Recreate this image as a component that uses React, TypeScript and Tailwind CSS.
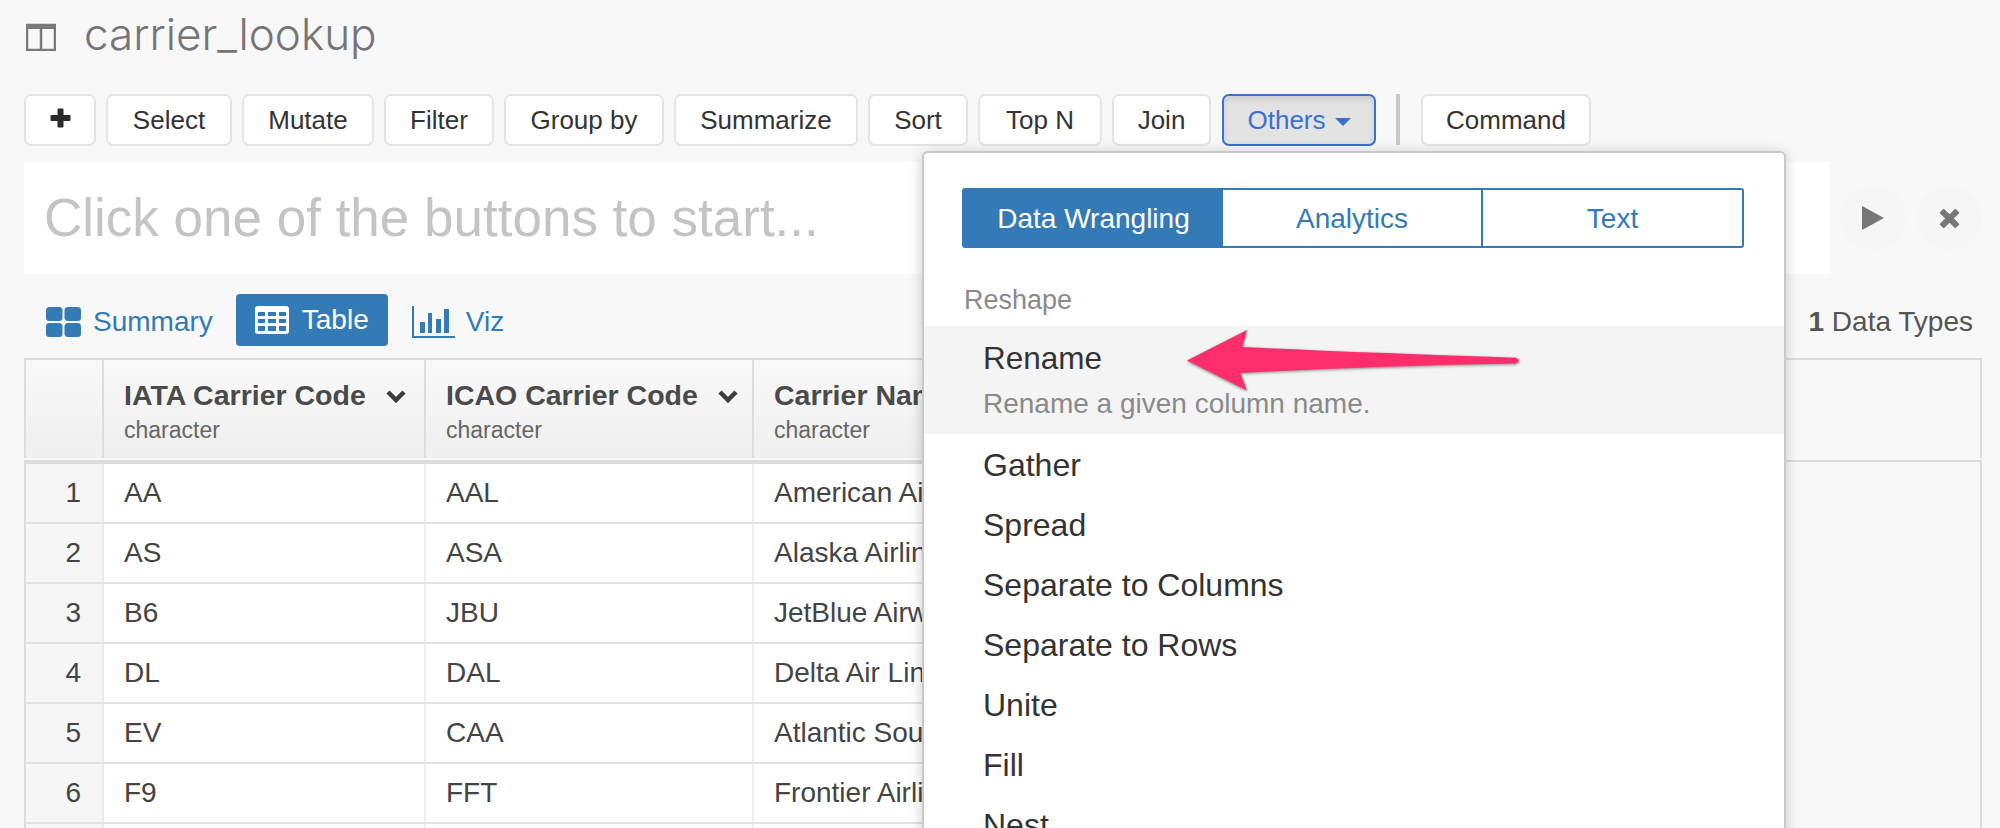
const BUTTONS = [
  { label: 'Select', width: 'w-[126px]' },
  { label: 'Mutate', width: 'w-[132px]' },
  { label: 'Filter', width: 'w-[110px]' },
  { label: 'Group by', width: 'w-[160px]' },
  { label: 'Summarize', width: 'w-[184px]' },
  { label: 'Sort', width: 'w-[100px]' },
  { label: 'Top N', width: 'w-[124px]' },
  { label: 'Join', width: 'w-[99px]' },
];

const ROWS = [
  ['AA', 'AAL', 'American Airlines'],
  ['AS', 'ASA', 'Alaska Airlines'],
  ['B6', 'JBU', 'JetBlue Airways'],
  ['DL', 'DAL', 'Delta Air Lines'],
  ['EV', 'CAA', 'Atlantic Southeast'],
  ['F9', 'FFT', 'Frontier Airlines'],
];

const MENU_ITEMS = ['Gather', 'Spread', 'Separate to Columns', 'Separate to Rows', 'Unite', 'Fill', 'Nest'];

function HeaderCell({ title, width }: { title: string; width: string }) {
  return (
    <div className={`${width} shrink-0 border-r-2 border-[#dcdcdc] pl-[20px] pt-[19px]`}>
      <div className="flex items-center">
        <span className="text-[28.5px] leading-[32px] font-bold whitespace-nowrap text-[#4a4a4a]">{title}</span>
        <svg width="22" height="14" viewBox="0 0 22 14" className="ml-[19px] mt-[2px] shrink-0">
          <path d="M3 3l8 8 8-8" fill="none" stroke="#3c3c3c" strokeWidth="4.5" />
        </svg>
      </div>
      <div className="mt-[6px] text-[23px] leading-[26px] text-[#666]">character</div>
    </div>
  );
}

export default function App() {
  return (
    <div className="relative h-[828px] w-[2000px] overflow-hidden bg-[#f8f8f8] font-['Liberation_Sans',sans-serif]">
      {/* Title */}
      <div className="flex h-[94px] items-start pl-[26px] pt-[9px]">
        <svg width="30" height="28" viewBox="0 0 30 28" className="mt-[14px]">
          <path d="M1 2h28v25H1z M15 6v21" fill="none" stroke="#7a7a7a" strokeWidth="2.5" />
          <rect x="1" y="1" width="28" height="5" fill="#7a7a7a" />
        </svg>
        <h1 className="ml-[28px] font-['Inter',sans-serif] text-[44px] leading-[50px] font-light text-[#757575]">
          carrier_lookup
        </h1>
      </div>

      {/* Toolbar */}
      <div className="flex h-[52px] items-stretch gap-[10px] pl-[24px]">
        <button className="flex w-[72px] items-center justify-center rounded-[7px] border-2 border-[#e4e4e4] bg-white">
          <svg width="21" height="20" viewBox="0 0 21 20" className="mb-[4px]">
            <path d="M7.5 1.5q0-1 1-1h4q1 0 1 1V7h6q1 0 1 1v4q0 1-1 1h-6v5.500q0 1-1 1h-4q-1 0-1-1V13h-6q-1 0-1-1V8q0-1 1-1h6z" fill="#2b2b2b" />
          </svg>
        </button>
        {BUTTONS.map((b) => (
          <button
            key={b.label}
            className={`${b.width} rounded-[7px] border-2 border-[#e4e4e4] bg-white text-[26px] text-[#333]`}
          >
            {b.label}
          </button>
        ))}
        <button className="ml-[1px] flex w-[154px] items-center justify-center gap-[9px] rounded-[7px] border-2 border-[#3a70d0] bg-[#e3e3e3] text-[26px] text-[#3a70d0] shadow-[inset_0_3px_6px_rgba(0,0,0,0.1)]">
          Others
          <span className="mt-[3px] border-x-[8px] border-t-[8px] border-x-transparent border-t-[#3a70d0]" />
        </button>
        <div className="ml-[10px] mb-[1px] w-[4px] bg-[#c8c8c8]" />
        <button className="ml-[11px] w-[170px] rounded-[7px] border-2 border-[#e4e4e4] bg-white text-[26px] text-[#333]">
          Command
        </button>
      </div>

      {/* Input row */}
      <div className="mt-[16px] flex h-[112px] items-center pl-[24px]">
        <div className="flex h-full w-[1806px] items-center bg-white pl-[20px] text-[53px] text-[#c4c4c4]">
          Click one of the buttons to start...
        </div>
        <div className="ml-[10px] flex h-[64px] w-[66px] items-center justify-center rounded-full bg-[#f6f6f6]">
          <svg width="22" height="24" viewBox="0 0 22 24">
            <path d="M0 0l22 12L0 24z" fill="#777" />
          </svg>
        </div>
        <div className="ml-[10px] flex h-[64px] w-[66px] items-center justify-center rounded-full bg-[#f6f6f6]">
          <svg width="23" height="23" viewBox="0 0 20 20">
            <path d="M2 5l3-3 5 5 5-5 3 3-5 5 5 5-3 3-5-5-5 5-3-3 5-5z" fill="#777" stroke="#777" strokeLinejoin="round" />
          </svg>
        </div>
      </div>

      {/* View tabs */}
      <div className="flex h-[84px] items-start pl-[46px] pt-[20px]">
        <div className="mt-[2px] flex h-[52px] items-center gap-[12px] text-[28px] text-[#337ab7]">
          <svg width="35" height="30" viewBox="0 0 35 30">
            <rect x="0" y="0" width="16.500" height="14" rx="3.500" fill="#337ab7" />
            <rect x="18.500" y="0" width="16.500" height="14" rx="3.500" fill="#337ab7" />
            <rect x="0" y="16" width="16.500" height="14" rx="3.500" fill="#337ab7" />
            <rect x="18.500" y="16" width="16.500" height="14" rx="3.500" fill="#337ab7" />
          </svg>
          Summary
        </div>
        <div className="ml-[23px] flex h-[52px] w-[152px] items-center gap-[13px] rounded-[4px] bg-[#337ab7] pl-[19px] text-[28px] text-white">
          <svg width="34" height="28" viewBox="0 0 34 28">
            <rect x="0" y="0" width="34" height="28" rx="3" fill="#fff" />
            <path
              d="M3 6h7v4H3zM13 6h8v4h-8zM24 6h7v4h-7zM3 13h7v4H3zM13 13h8v4h-8zM24 13h7v4h-7zM3 20h7v5H3zM13 20h8v5h-8zM24 20h7v5h-7z"
              fill="#337ab7"
            />
          </svg>
          Table
        </div>
        <div className="ml-[24px] mt-[2px] flex h-[52px] items-center gap-[11px] text-[28px] text-[#337ab7]">
          <svg width="43" height="32" viewBox="0 0 43 32">
            <path d="M1 0v31h42" fill="none" stroke="#337ab7" strokeWidth="2" />
            <rect x="8" y="16" width="5" height="11" fill="#337ab7" />
            <rect x="16" y="7" width="4" height="20" fill="#337ab7" />
            <rect x="24" y="13" width="5" height="14" fill="#337ab7" />
            <rect x="32" y="3" width="5" height="24" fill="#337ab7" />
          </svg>
          Viz
        </div>
        <div className="ml-auto mr-[27px] mt-[2px] flex h-[52px] items-center text-[28px] whitespace-pre text-[#555]">
          <span className="font-bold">1</span> Data Types
        </div>
      </div>

      {/* Table header */}
      <div className="ml-[24px] h-[100px] w-[1958px] border-x-2 border-t-2 border-[#dcdcdc]">
        <div className="flex h-[98px] w-[1130px] bg-gradient-to-b from-[#f9f9f9] to-[#efefef]">
          <div className="w-[78px] shrink-0 border-r-2 border-[#dcdcdc]" />
          <HeaderCell title="IATA Carrier Code" width="w-[322px]" />
          <HeaderCell title="ICAO Carrier Code" width="w-[328px]" />
          <HeaderCell title="Carrier Name" width="w-[400px]" />
        </div>
      </div>

      {/* Table body */}
      <div className="ml-[24px] mt-[2px] h-[400px] w-[1958px] border-x-2 border-t-2 border-[#dcdcdc]">
        <div className="h-[2px] w-[1130px] bg-[#dcdcdc]" />
        {ROWS.map((row, i) => (
          <div key={row[0]} className="flex h-[60px] w-[1130px] border-b-2 border-[#e2e2e2] text-[28px] text-[#444]">
            <div className="flex w-[78px] shrink-0 items-center justify-end border-r-2 border-[#eaeaea] bg-[#f6f6f6] pr-[21px]">
              {i + 1}
            </div>
            <div className="flex w-[322px] shrink-0 items-center border-r-2 border-[#eeeeee] bg-white pl-[20px]">{row[0]}</div>
            <div className="flex w-[328px] shrink-0 items-center border-r-2 border-[#eeeeee] bg-white pl-[20px]">{row[1]}</div>
            <div className="flex w-[400px] shrink-0 items-center whitespace-nowrap bg-white pl-[20px]">{row[2]}</div>
          </div>
        ))}
        <div className="flex h-[60px] w-[1130px]">
          <div className="w-[78px] shrink-0 border-r-2 border-[#eaeaea] bg-[#f6f6f6]" />
          <div className="w-[322px] shrink-0 border-r-2 border-[#eeeeee] bg-white" />
          <div className="w-[328px] shrink-0 border-r-2 border-[#eeeeee] bg-white" />
          <div className="w-[400px] shrink-0 bg-white" />
        </div>
      </div>

      {/* Others dropdown */}
      <div className="absolute left-[922px] top-[151px] h-[700px] w-[864px] rounded-[6px] border-2 border-[#c8c8c8] bg-white shadow-[0_2px_14px_rgba(0,0,0,0.2)]">
        <div className="ml-[38px] mt-[35px] flex h-[60px] w-[782px] rounded-[3px] border-2 border-[#337ab7] pb-0 text-[28px] text-[#337ab7]">
          <div className="flex w-[259px] items-center justify-center bg-[#337ab7] pt-[2px] text-white">Data Wrangling</div>
          <div className="flex w-[260px] items-center justify-center border-r-2 border-[#337ab7] pt-[2px]">Analytics</div>
          <div className="flex flex-1 items-center justify-center pt-[2px]">Text</div>
        </div>
        <div className="ml-[40px] mt-[38px] h-[29px] text-[27px] leading-[29px] text-[#8a8a8a]">Reshape</div>
        <div className="mt-[11px] h-[108px] bg-[#f4f4f4] pl-[59px] pt-[15px]">
          <div className="text-[31.5px] leading-[34px] text-[#333]">Rename</div>
          <div className="mt-[14px] text-[28px] leading-[30px] text-[#8a8a8a]">Rename a given column name.</div>
        </div>
        <div className="pl-[59px] pt-[1px]">
          {MENU_ITEMS.map((item) => (
            <div key={item} className="flex h-[60px] items-center text-[32px] text-[#333]">
              {item}
            </div>
          ))}
        </div>
      </div>

      {/* Annotation arrow */}
      <svg
        className="absolute left-[1170px] top-[320px] drop-shadow-[0_1.5px_1.5px_rgba(0,0,0,0.45)]"
        width="370"
        height="80"
        viewBox="0 0 370 80"
      >
        <path d="M17 40.500L77 10 L72.500 27 Q200 33 346 37.700 Q352 40.500 346 43.500 Q200 46 70.500 53 L77 70.500z" fill="#ff2d6b" />
      </svg>
    </div>
  );
}
